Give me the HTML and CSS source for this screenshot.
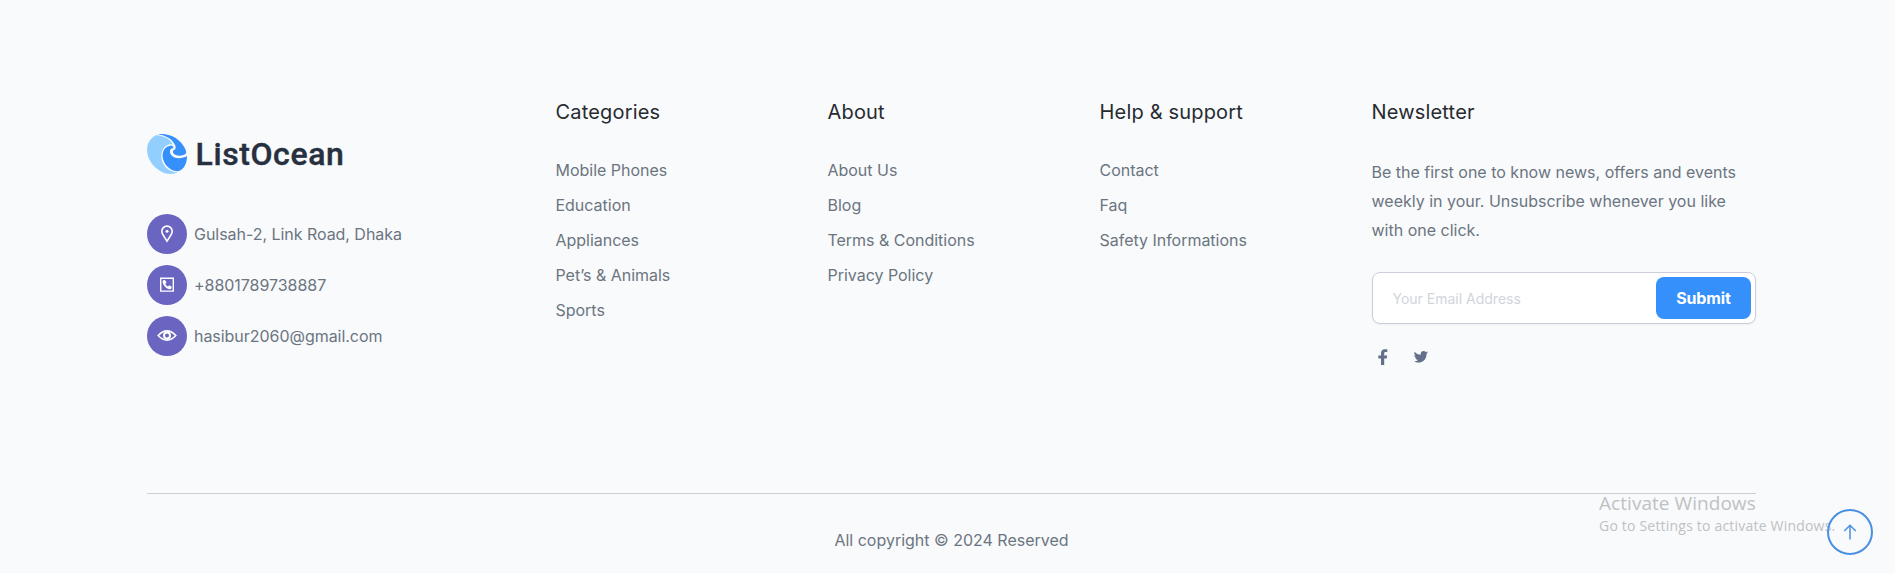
FILE: index.html
```html
<!DOCTYPE html>
<html lang="en">
<head>
<meta charset="utf-8">
<title>ListOcean</title>
<link rel="stylesheet" href="styles.css">
</head>
<body>
<footer class="footer">
  <div class="footer-grid">
    <section class="brand">
      <a class="logo" href="#">
        <svg class="logo-mark" viewBox="0 0 120 120">
          <path fill="#93cffe" d="M27 4C8 13-3 32 1 57c5 33 37 62 69 63 9 0 16-2 22-5C65 115 43 94 43 67c0-19 10-33 26-36 4-1 7 0 9 2-6-14-19-22-33-26C39 5 33 4 27 4z"/>
          <path fill="#3590fc" d="M31 1c21-4 48 2 66 20 16 15 23 33 20 37-4 7-21 10-31 5-9-4-11-12-5-15 5-2 6-7 4-13C78 17 57 4 31 1z"/>
          <path fill="#3590fc" d="M70 35c-16 2-25 16-23 34 3 23 23 43 46 43 18-5 27-24 27-46-11 7-29 9-40 3-9-5-13-14-10-21 2-4 6-5 9-5 2-4-3-9-9-8z"/>
        </svg>
        <span class="logo-text">ListOcean</span>
      </a>
      <ul class="contact">
        <li><span class="badge"><svg width="20" height="20" viewBox="0 0 20 20"><path fill="none" stroke="#fff" stroke-width="1.6" d="M10 17.2C8 13.600 4.800 10.300 4.800 7.300a5.200 5.200 0 0 1 10.400 0c0 3-3.200 6.300-5.200 9.900z"/><circle cx="10" cy="7.300" r="1.500" fill="#fff"/></svg></span>Gulsah-2, Link Road, Dhaka</li>
        <li><span class="badge"><svg width="20" height="20" viewBox="0 0 20 20"><path fill="none" stroke="#fff" stroke-width="1.400" d="M3.700 3.200h12.600v12.900H3.700z"/><path fill="#fff" d="M6.400 5.200 8 5l1.500 2.600-1.200 1.300c.6 1.200 1.400 2 2.600 2.600l1.400-1.200 2.400 1.500-.3 1.800c-.2.500-.9.800-1.700.7C9.500 13.900 6 10.500 5.600 7c-.1-.8.200-1.600.8-1.800z"/></svg></span>+8801789738887</li>
        <li><span class="badge"><svg width="20" height="20" viewBox="0 0 20 20"><path fill="none" stroke="#fff" stroke-width="1.600" d="M1.200 9.500Q5.500 4.900 10 4.900t8.800 4.600Q14.500 14.100 10 14.100T1.200 9.500z"/><circle cx="10" cy="9.500" r="3" fill="none" stroke="#fff" stroke-width="2"/></svg></span>hasibur2060@gmail.com</li>
      </ul>
    </section>
    <section>
      <h2 class="title">Categories</h2>
      <ul class="links"><li>Mobile Phones</li><li>Education</li><li>Appliances</li><li>Pet’s &amp; Animals</li><li>Sports</li></ul>
    </section>
    <section>
      <h2 class="title">About</h2>
      <ul class="links"><li>About Us</li><li>Blog</li><li>Terms &amp; Conditions</li><li>Privacy Policy</li></ul>
    </section>
    <section>
      <h2 class="title">Help &amp; support</h2>
      <ul class="links"><li>Contact</li><li>Faq</li><li>Safety Informations</li></ul>
    </section>
    <section>
      <h2 class="title">Newsletter</h2>
      <p class="intro">Be the first one to know news, offers and events weekly in your. Unsubscribe whenever you like with one click.</p>
      <form class="subscribe">
        <input class="email" type="email" placeholder="Your Email Address">
        <button class="submit" type="button">Submit</button>
      </form>
      <div class="social">
        <svg width="10" height="16" viewBox="0 0 10 16"><path fill="#64708a" d="M3 16V9.400H.3V6.500H3V4.300C3 1.600 4.500.2 6.900.2c1.100 0 2.100.1 2.400.1v2.700H7.700C6.500 3 6.200 3.600 6.200 4.500v2h3l-.4 2.900H6.200V16z"/></svg>
        <svg width="14" height="12" viewBox="0 0 14 12"><path fill="#64708a" d="M12.500 3c.2 5-3.600 8.600-8.200 8.600-1.600 0-3.100-.5-4.300-1.300 1.500.2 3-.3 4.100-1.200-1.200 0-2.300-.8-2.700-2 .4.100.8.100 1.200 0C1.200 6.800.3 5.600.3 4.200c.4.200.9.300 1.300.4C.3 3.700 0 2 .7.700c1.500 1.800 3.600 2.900 6 3C6.200 1.500 7.900 0 9.600 0c.8 0 1.600.3 2.100.9.700-.1 1.300-.4 1.800-.7-.2.700-.7 1.200-1.200 1.600.6-.1 1.100-.2 1.700-.5-.4.700-.9 1.200-1.500 1.700z"/></svg>
      </div>
    </section>
  </div>
  <div class="copyright">All copyright © 2024 Reserved</div>
</footer>
<div class="watermark"><div class="wm-title">Activate Windows</div><div class="wm-text">Go to Settings to activate Windows.</div></div>
<div class="to-top"><svg width="14" height="16" viewBox="0 0 14 16"><path fill="none" stroke="#4a90e2" stroke-width="1.500" d="M7 15.500V1.500M1.300 7 7 1.300 12.700 7"/></svg></div>
</body>
</html>
```
FILE: styles.css
```css
* { box-sizing: border-box; }
body { margin: 0; height: 573px; overflow: hidden; background: #f9fafc; color: #6b7580; font: 16px/26px Inter, sans-serif; }
ul, h2, p { margin: 0; padding: 0; list-style: none; }
.footer { width: 1609px; margin-left: 147px; padding-top: 99px; }
.footer-grid { display: grid; grid-template-columns: 408.5px 272px 272px 272px 384.5px; height: 394px; }
.brand { padding-top: 35px; }
.logo { display: flex; align-items: center; gap: 8.5px; height: 40px; text-decoration: none; }
.logo-mark { width: 40px; height: 40px; }
.logo-text { font: 500 32px/40px Roboto, sans-serif; color: #27303f; -webkit-text-stroke: .4px #27303f; letter-spacing: .6px; }
.contact { display: flex; flex-direction: column; gap: 11px; margin-top: 40px; }
.contact li { display: flex; align-items: center; gap: 7px; height: 40px; letter-spacing: -.04px; }
.badge { display: flex; align-items: center; justify-content: center; width: 40px; height: 40px; border-radius: 50%; background: #6b65c2; }
.title { font-size: 20px; font-weight: 400; line-height: 26px; color: #272b30; letter-spacing: .18px; }
.links { display: flex; flex-direction: column; gap: 9px; margin-top: 32px; letter-spacing: -.02px; }
.intro { margin-top: 33px; line-height: 29px; }
.subscribe { display: flex; align-items: center; height: 52px; margin-top: 27px; padding-right: 4px; border: 1px solid #cbced6; border-radius: 8px; background: #fff; box-shadow: 0 1px 2px #1018280d; }
.email { flex: 1; min-width: 0; padding: 2px 0 0 20px; border: 0; outline: 0; background: none; font: 14px/20px Inter, sans-serif; }
.email::placeholder { color: #d0d5dd; opacity: 1; }
.submit { width: 95px; height: 42px; padding: 0; border: 0; border-radius: 8px; background: #3590fc; color: #fff; font: 700 16px/24px Inter, sans-serif; letter-spacing: -.1px; }
.social { display: flex; align-items: center; gap: 26px; margin: 25px 0 0 6px; }
.copyright { padding-top: 33px; border-top: 1px solid #cbced2; text-align: center; }
.watermark { position: absolute; left: 1599px; top: 490px; color: #bfc1c3; font-family: "Open Sans", sans-serif; white-space: nowrap; }
.wm-title { font-size: 19px; line-height: 27px; letter-spacing: .05px; }
.wm-text { font-size: 14px; line-height: 18px; letter-spacing: .2px; }
.to-top { position: absolute; left: 1827px; top: 509px; display: flex; align-items: center; justify-content: center; width: 46px; height: 46px; border: 2px solid #4a90e2; border-radius: 50%; }
```
